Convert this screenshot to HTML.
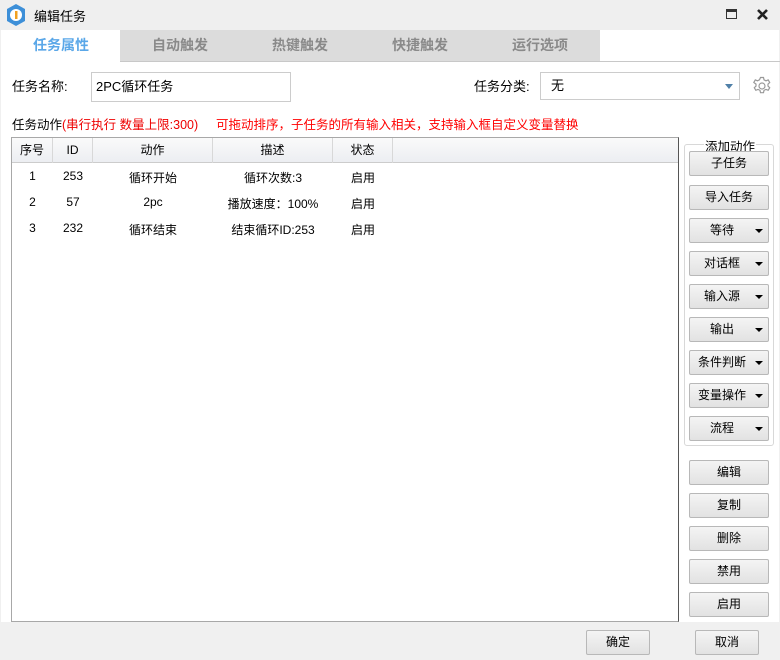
<!DOCTYPE html><html><head><meta charset="utf-8"><style>
*{box-sizing:border-box;margin:0;padding:0}
body{width:780px;height:660px;background:#f0f0f0;font-family:"Liberation Sans","Noto Sans CJK SC",sans-serif;font-size:12px;color:#000;position:relative;overflow:hidden}
.a{position:absolute}
.tab{position:absolute;top:30px;height:31px;width:120px;background:#dcdcdc;color:#8a8a8a;font-size:14px;font-weight:bold;text-align:center;line-height:31px}
.btn{position:absolute;left:689px;width:80px;height:25px;border:1px solid #b8b8b8;border-radius:2px;background:linear-gradient(#f4f4f4,#e2e2e2);text-align:center;line-height:23px;font-size:12px}
.dd::after{content:"";position:absolute;right:5px;top:10px;border:4px solid transparent;border-top:4px solid #000;border-bottom:0}
.dd{padding-right:14px}
.th{position:absolute;top:0;height:25px;line-height:24px;text-align:center;border-right:1px solid #d8d8d8}
.td{position:absolute;text-align:center}
</style></head><body>
<div class="a" style="left:0;top:0;width:780px;height:30px;background:#efefef"></div>
<svg class="a" style="left:5px;top:4px" width="22" height="22" viewBox="0 0 22 22"><polygon points="11,0 20,5 20,17 11,22 2,17 2,5" fill="#3d8fd8"/><circle cx="11" cy="11" r="6" fill="#fff"/><rect x="10" y="7" width="2.5" height="8" fill="#f0a020"/></svg>
<div class="a" style="left:34px;top:6px;font-size:13px">编辑任务</div>
<div class="a" style="left:726px;top:9px;width:11px;height:10px;border:1px solid #333;border-top-width:3px"></div>
<svg class="a" style="left:757px;top:9px" width="11" height="11" viewBox="0 0 11 11"><path d="M1 1L10 10M10 1L1 10" stroke="#222" stroke-width="2.6"/></svg>
<div class="a" style="left:1px;top:30px;width:778px;height:592px;background:#fff"></div>
<div class="tab" style="left:1px;background:#fff;color:#5aa7e8">任务属性</div>
<div class="tab" style="left:120px">自动触发</div>
<div class="tab" style="left:240px">热键触发</div>
<div class="tab" style="left:360px">快捷触发</div>
<div class="tab" style="left:480px">运行选项</div>
<div class="a" style="left:120px;top:61px;width:660px;height:1px;background:#c8c8c8"></div>
<div class="a" style="left:12px;top:76px;font-size:13px">任务名称:</div>
<div class="a" style="left:91px;top:72px;width:200px;height:30px;border:1px solid #ccc;padding-left:4px;line-height:28px;font-size:13px">2PC循环任务</div>
<div class="a" style="left:474px;top:76px;font-size:13px">任务分类:</div>
<div class="a" style="left:540px;top:72px;width:200px;height:28px;border:1px solid #ccc;padding-left:10px;line-height:26px;font-size:13px">无</div>
<div class="a" style="left:725px;top:84px;border:4px solid transparent;border-top:5px solid #5080a8;border-bottom:0"></div>
<svg class="a" style="left:752px;top:76px" width="20" height="20" viewBox="0 0 20 20" fill="none" stroke="#999" stroke-width="1.2"><circle cx="10" cy="10" r="3"/><path d="M8.5 1.5h3l.5 2.3 2 1 2.2-.9 1.5 2.6-1.7 1.6v2l1.7 1.6-1.5 2.6-2.2-.9-2 1-.5 2.3h-3l-.5-2.3-2-1-2.2.9-1.5-2.6 1.7-1.6v-2L1.8 6.5l1.5-2.6 2.2.9 2-1z"/></svg>
<div class="a" style="left:12px;top:114px;font-size:12.5px">任务动作<span style="color:#e00">(串行执行 数量上限:300)</span></div>
<div class="a" style="left:216px;top:114px;font-size:12.5px;color:#f00">可拖动排序，子任务的所有输入相关，支持输入框自定义变量替换</div>
<div class="a" style="left:11px;top:137px;width:668px;height:485px;border:1px solid #a8a8a8;border-right-color:#555;background:#fff">
<div class="a" style="left:0;top:0;width:666px;height:25px;background:linear-gradient(#fafafa,#eceef2);border-bottom:1px solid #ccc"></div>
<div class="th" style="left:0;width:41px">序号</div><div class="th" style="left:41px;width:40px">ID</div><div class="th" style="left:81px;width:120px">动作</div><div class="th" style="left:201px;width:120px">描述</div><div class="th" style="left:321px;width:60px">状态</div>
<div class="td" style="left:0;width:41px;top:31px">1</div><div class="td" style="left:41px;width:40px;top:31px">253</div><div class="td" style="left:81px;width:120px;top:31px">循环开始</div><div class="td" style="left:201px;width:120px;top:31px">循环次数:3</div><div class="td" style="left:321px;width:60px;top:31px">启用</div>
<div class="td" style="left:0;width:41px;top:57px">2</div><div class="td" style="left:41px;width:40px;top:57px">57</div><div class="td" style="left:81px;width:120px;top:57px">2pc</div><div class="td" style="left:201px;width:120px;top:57px">播放速度：100%</div><div class="td" style="left:321px;width:60px;top:57px">启用</div>
<div class="td" style="left:0;width:41px;top:83px">3</div><div class="td" style="left:41px;width:40px;top:83px">232</div><div class="td" style="left:81px;width:120px;top:83px">循环结束</div><div class="td" style="left:201px;width:120px;top:83px">结束循环ID:253</div><div class="td" style="left:321px;width:60px;top:83px">启用</div>
</div>
<div class="a" style="left:684px;top:144px;width:90px;height:302px;border:1px solid #d8d8d8;border-radius:3px"></div>
<div class="a" style="left:704px;top:136px;background:#fff;padding:0 1px;font-size:12.5px">添加动作</div>
<div class="btn" style="top:151px">子任务</div>
<div class="btn" style="top:185px">导入任务</div>
<div class="btn dd" style="top:218px">等待</div>
<div class="btn dd" style="top:251px">对话框</div>
<div class="btn dd" style="top:284px">输入源</div>
<div class="btn dd" style="top:317px">输出</div>
<div class="btn dd" style="top:350px">条件判断</div>
<div class="btn dd" style="top:383px">变量操作</div>
<div class="btn dd" style="top:416px">流程</div>
<div class="btn" style="top:460px">编辑</div>
<div class="btn" style="top:493px">复制</div>
<div class="btn" style="top:526px">删除</div>
<div class="btn" style="top:559px">禁用</div>
<div class="btn" style="top:592px">启用</div>
<div class="btn" style="left:586px;top:630px;width:64px">确定</div>
<div class="btn" style="left:695px;top:630px;width:64px">取消</div>
</body></html>
